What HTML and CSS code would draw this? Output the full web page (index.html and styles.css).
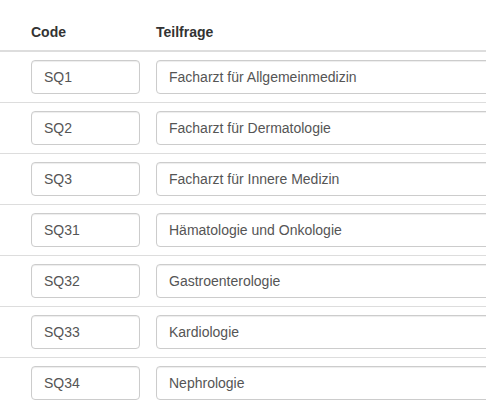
FILE: index.html
```html
<!DOCTYPE html>
<html lang="de">
<head>
<meta charset="utf-8">
<title>Teilfragen</title>
<link rel="stylesheet" href="styles.css">
</head>
<body>
<div class="wrap">
<table class="table">
  <thead>
    <tr>
      <th class="handle"></th>
      <th class="code">Code</th>
      <th class="text">Teilfrage</th>
    </tr>
  </thead>
  <tbody>
    <tr><td class="handle"></td><td class="code"><input class="form-control code-input" type="text" value="SQ1"></td><td class="text"><input class="form-control text-input" type="text" value="Facharzt für Allgemeinmedizin"></td></tr>
    <tr><td class="handle"></td><td class="code"><input class="form-control code-input" type="text" value="SQ2"></td><td class="text"><input class="form-control text-input" type="text" value="Facharzt für Dermatologie"></td></tr>
    <tr><td class="handle"></td><td class="code"><input class="form-control code-input" type="text" value="SQ3"></td><td class="text"><input class="form-control text-input" type="text" value="Facharzt für Innere Medizin"></td></tr>
    <tr><td class="handle"></td><td class="code"><input class="form-control code-input" type="text" value="SQ31"></td><td class="text"><input class="form-control text-input" type="text" value="Hämatologie und Onkologie"></td></tr>
    <tr><td class="handle"></td><td class="code"><input class="form-control code-input" type="text" value="SQ32"></td><td class="text"><input class="form-control text-input" type="text" value="Gastroenterologie"></td></tr>
    <tr><td class="handle"></td><td class="code"><input class="form-control code-input" type="text" value="SQ33"></td><td class="text"><input class="form-control text-input" type="text" value="Kardiologie"></td></tr>
    <tr><td class="handle"></td><td class="code"><input class="form-control code-input" type="text" value="SQ34"></td><td class="text"><input class="form-control text-input" type="text" value="Nephrologie"></td></tr>
  </tbody>
</table>
</div>
</body>
</html>
```
FILE: styles.css
```css
html, body {
  margin: 0;
  padding: 0;
  background: #fff;
}
body {
  font-family: "Liberation Sans", Arial, Helvetica, sans-serif;
  font-size: 14px;
  line-height: 20px;
  color: #333;
}
.wrap {
  padding-top: 14px;
  width: 100%;
  overflow: hidden;
}
.table {
  border-collapse: collapse;
  border-spacing: 0;
  width: 700px;
}
.table th,
.table td {
  padding: 8px;
  text-align: left;
  vertical-align: middle;
  line-height: 20px;
}
.table th {
  font-weight: bold;
  border-bottom: 2px solid #ddd;
  vertical-align: bottom;
}
.table td {
  border-top: 1px solid #ddd;
}
.table .handle {
  width: 7px;
}
.table .code {
  width: 109px;
}
.form-control {
  display: block;
  box-sizing: border-box;
  height: 34px;
  padding: 6px 12px;
  font-family: inherit;
  font-size: 14px;
  line-height: 20px;
  color: #555;
  background: #fff;
  border: 1px solid #ccc;
  border-radius: 4px;
  box-shadow: inset 0 1px 1px rgba(0, 0, 0, 0.075);
  margin: 0;
}
.code-input {
  width: 109px;
}
.text-input {
  width: 100%;
}
```
